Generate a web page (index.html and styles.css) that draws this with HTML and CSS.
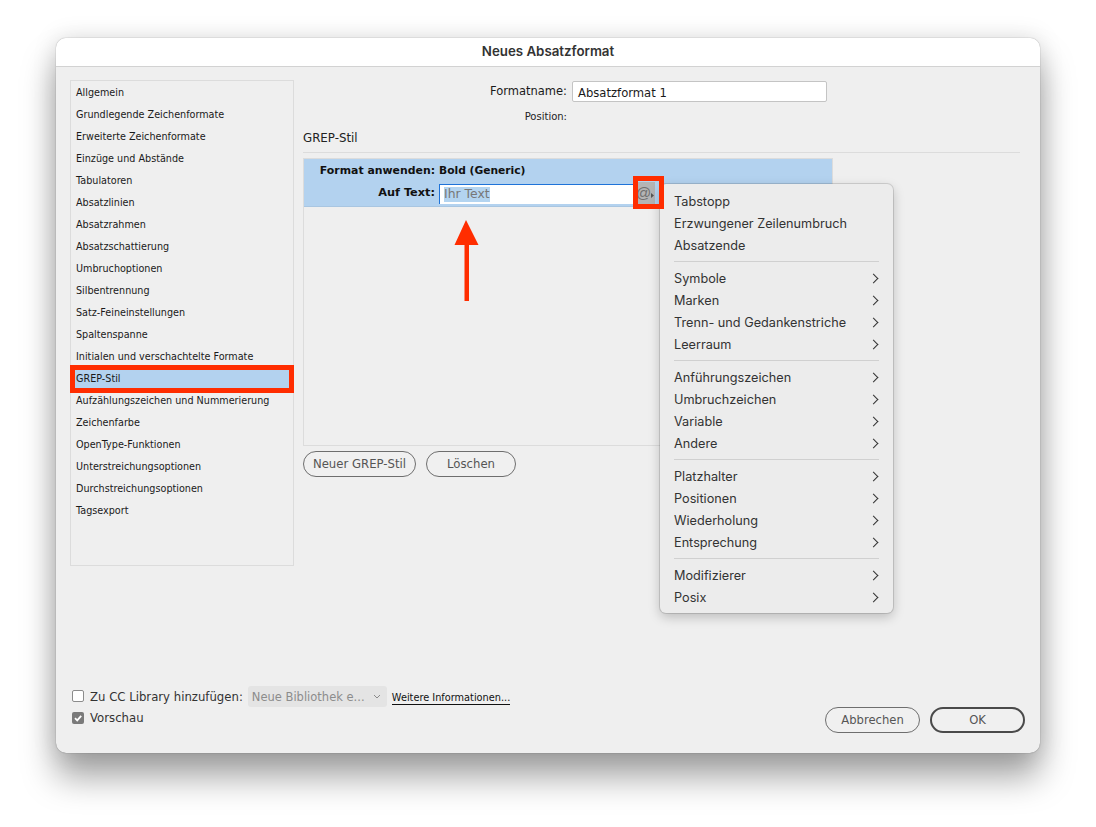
FILE: index.html
```html
<!DOCTYPE html>
<html lang="de">
<head>
<meta charset="utf-8">
<title>Neues Absatzformat</title>
<link rel="stylesheet" href="styles.css">
</head>
<body>
<div class="stage">
  <div class="dialog">
    <header class="titlebar">Neues Absatzformat</header>
    <div class="content">
      <ul class="sidebar">
        <li>Allgemein</li>
        <li>Grundlegende Zeichenformate</li>
        <li>Erweiterte Zeichenformate</li>
        <li>Einzüge und Abstände</li>
        <li>Tabulatoren</li>
        <li>Absatzlinien</li>
        <li>Absatzrahmen</li>
        <li>Absatzschattierung</li>
        <li>Umbruchoptionen</li>
        <li>Silbentrennung</li>
        <li>Satz-Feineinstellungen</li>
        <li>Spaltenspanne</li>
        <li>Initialen und verschachtelte Formate</li>
        <li class="selected">GREP-Stil</li>
        <li>Aufzählungszeichen und Nummerierung</li>
        <li>Zeichenfarbe</li>
        <li>OpenType-Funktionen</li>
        <li>Unterstreichungsoptionen</li>
        <li>Durchstreichungsoptionen</li>
        <li>Tagsexport</li>
      </ul>
      <main class="main">
        <div class="name-row">
          <span class="name-label">Formatname:</span>
          <span class="name-input">Absatzformat 1</span>
        </div>
        <div class="position-row">Position:</div>
        <div class="section-title">GREP-Stil</div>
        <div class="panel">
          <div class="rule-band">
            <div class="rule-row rule-row-top">
              <span class="rule-label">Format anwenden:</span>
              <span class="rule-value">Bold (Generic)</span>
            </div>
            <div class="rule-row rule-row-text">
              <span class="rule-label">Auf Text:</span>
              <span class="rule-input"><span class="sel">Ihr Text</span></span>
              <span class="at-button">@<svg class="at-caret" width="3" height="5" viewBox="0 0 3 5"><path d="M0 0l3 2.500-3 2.500z"/></svg></span>
            </div>
          </div>
        </div>
        <div class="panel-buttons">
          <span class="btn btn-new">Neuer GREP-Stil</span>
          <span class="btn btn-del">Löschen</span>
        </div>
      </main>
    </div>
    <footer class="footer">
      <div class="footer-left">
        <div class="check-row">
          <span class="check"></span>
          <span class="check-label">Zu CC Library hinzufügen:</span>
          <span class="select">Neue Bibliothek e...<svg class="select-caret" width="8" height="5" viewBox="0 0 8 5"><path d="M1 1l3 3 3-3" fill="none" stroke="#8a8a8a" stroke-width="1"/></svg></span>
          <span class="more-link">Weitere Informationen...</span>
        </div>
        <div class="check-row check-row-last">
          <span class="check checked"><svg width="12" height="12" viewBox="0 0 12 12"><path d="M3 6.200l2.200 2.200L9.200 3.800" fill="none" stroke="#fff" stroke-width="1.800"/></svg></span>
          <span class="check-label">Vorschau</span>
        </div>
      </div>
      <div class="footer-right">
        <span class="btn btn-action">Abbrechen</span>
        <span class="btn btn-action btn-default">OK</span>
      </div>
    </footer>

    <div class="menu">
      <div class="mi">Tabstopp</div>
      <div class="mi">Erzwungener Zeilenumbruch</div>
      <div class="mi">Absatzende</div>
      <div class="sep"></div>
      <div class="mi sub">Symbole</div>
      <div class="mi sub">Marken</div>
      <div class="mi sub">Trenn- und Gedankenstriche</div>
      <div class="mi sub">Leerraum</div>
      <div class="sep"></div>
      <div class="mi sub">Anführungszeichen</div>
      <div class="mi sub">Umbruchzeichen</div>
      <div class="mi sub">Variable</div>
      <div class="mi sub">Andere</div>
      <div class="sep"></div>
      <div class="mi sub">Platzhalter</div>
      <div class="mi sub">Positionen</div>
      <div class="mi sub">Wiederholung</div>
      <div class="mi sub">Entsprechung</div>
      <div class="sep"></div>
      <div class="mi sub">Modifizierer</div>
      <div class="mi sub">Posix</div>
    </div>

    <div class="at-highlight"></div>
    <svg class="arrow" width="26" height="82" viewBox="0 0 26 82"><path d="M12 0L24.500 25H15V81H10.500V25H0.500z" fill="#ff2d00"/></svg>
  </div>
</div>
</body>
</html>
```
FILE: styles.css
```css
* { box-sizing: border-box; }
html, body { margin: 0; padding: 0; background: #fff; }
body { width: 1096px; height: 827px; overflow: hidden; font-family: "DejaVu Sans", sans-serif; color: #111; }
.stage { padding: 38px 56px 74px; }
.dialog {
  position: relative;
  width: 984px;
  height: 715px;
  display: flex;
  flex-direction: column;
  background: #efefef;
  border-radius: 10px;
  box-shadow: 0 24px 34px rgba(0,0,0,.36), 0 0 24px rgba(0,0,0,.13), 0 0 1px rgba(0,0,0,.55);
}
.titlebar {
  height: 29px;
  flex: none;
  text-align: center;
  background: #fff;
  border-bottom: 1px solid #d2d2d2;
  border-radius: 10px 10px 0 0;
  font: 600 13.300px/27px "Inter", sans-serif;
  color: #333;
}
.content { display: flex; padding: 13px 20px 0 14px; }

.sidebar {
  list-style: none;
  margin: 0;
  padding: 1px 0 0;
  width: 224px;
  height: 486px;
  flex: none;
  border: 1px solid #dcdcdc;
}
.sidebar li {
  position: relative;
  height: 22px;
  padding-left: 5px;
  font-size: 9.650px;
  line-height: 21px;
  white-space: nowrap;
  color: #1a1a1a;
}
.sidebar li.selected { background: #b3d2ef; }
.sidebar li.selected::after {
  content: "";
  position: absolute;
  inset: -3px -1px;
  border: 5px solid #ff2d00;
}

.main { flex: 1; margin-left: 9px; }
.name-row { display: flex; align-items: center; height: 22px; }
.name-label { width: 264px; text-align: right; font-size: 11.500px; color: #1a1a1a; }
.name-input {
  margin-left: 5px;
  width: 255px;
  height: 21px;
  padding: 1px 0 0 5px;
  background: #fff;
  border: 1px solid #c4c4c4;
  border-radius: 2px;
  font-size: 11.600px;
  line-height: 20px;
  color: #1a1a1a;
}
.position-row { height: 14px; margin-top: 8px; width: 264px; text-align: right; font-size: 10px; line-height: 14px; color: #222; }
.section-title {
  margin-top: 6px;
  height: 23px;
  border-bottom: 1px solid #dcdcdc;
  font-size: 11.800px;
  line-height: 16px;
  color: #222;
}
.panel {
  margin-top: 5px;
  width: 530px;
  height: 288px;
  border: 1px solid #dcdcdc;
}
.rule-band { height: 48px; padding-top: 3px; background: #b3d2ef; border-bottom: 1px solid #a9c6e1; }
.rule-row { display: flex; align-items: center; }
.rule-row-top { height: 17px; }
.rule-row-text { height: 27px; }
.rule-label { width: 131px; text-align: right; font-size: 10.900px; font-weight: 700; color: #111; white-space: nowrap; }
.rule-row-text .rule-label { font-size: 11.300px; }
.rule-value { margin-left: 4px; font-size: 10.700px; font-weight: 700; color: #111; white-space: nowrap; }
.rule-input {
  align-self: flex-start;
  margin-left: 4px;
  margin-top: 5px;
  width: 195px;
  height: 20px;
  padding: 2px 0 0 4px;
  background: #fff;
  border-top: 1px solid #1f73d8;
  border-left: 1px solid #1f73d8;
  font-size: 12.400px;
  line-height: 14px;
  color: #777;
}
.sel { background: #b3d4f0; display: inline-block; height: 15px; vertical-align: top; }
.at-button {
  position: relative;
  align-self: flex-start;
  width: 21px;
  height: 23px;
  margin-top: 3px;
  padding-left: 2px;
  background: #b4b4b4;
  font: 15px/21px "Liberation Sans", sans-serif;
  color: #707070;
}
.at-caret { position: absolute; right: 1px; bottom: 7px; fill: #555; }

.panel-buttons { display: flex; gap: 10px; margin-top: 5px; }
.btn {
  display: block;
  height: 26px;
  text-align: center;
  border: 1px solid #6e6e6e;
  border-radius: 13px;
  font-size: 11.700px;
  line-height: 25px;
  color: #555;
  background: #f0f0f0;
}
.btn-new { width: 113px; }
.btn-del { width: 90px; }

.footer {
  margin-top: auto;
  display: flex;
  justify-content: space-between;
  align-items: flex-end;
  padding: 0 15px 20px 16px;
}
.footer-left { margin-bottom: 5px; }
.check-row { display: flex; align-items: center; height: 22px; }
.check-row-last { height: 21px; }
.check {
  width: 12px;
  height: 12px;
  border: 1px solid #8c8c8c;
  border-radius: 2px;
  background: #fff;
  flex: none;
}
.check.checked { border: 0; background: #7a7a7a; }
.check svg { display: block; }
.check-label { margin-left: 6px; margin-top: 1px; font-size: 11.700px; color: #333; white-space: nowrap; }
.select {
  display: flex;
  align-items: center;
  justify-content: space-between;
  margin-left: 5px;
  width: 139px;
  height: 21px;
  padding: 1px 6px 0 4px;
  border-radius: 3px;
  background: #e4e4e4;
  font-size: 11.500px;
  color: #8c8c8c;
  white-space: nowrap;
}
.more-link {
  margin-left: 5px;
  margin-top: 4px;
  font-size: 9.750px;
  color: #111;
  white-space: nowrap;
  border-bottom: 1px solid #111;
  line-height: 13px;
}
.footer-right { display: flex; gap: 10px; }
.btn-action { width: 95px; font-size: 11.600px; }
.btn-default { border: 2px solid #4a4a4a; line-height: 23px; }

.menu {
  position: absolute;
  left: 604px;
  top: 146px;
  width: 233px;
  height: 429px;
  padding: 6px 0 5px;
  background: #ececec;
  border-radius: 6px;
  box-shadow: 0 0 0 1px rgba(0,0,0,.12), 0 4px 12px rgba(0,0,0,.22);
  font-family: "Inter", sans-serif;
  font-size: 12.700px;
  color: #333;
}
.mi { position: relative; height: 22px; line-height: 24px; padding-left: 14px; }
.mi.sub::after {
  content: "";
  position: absolute;
  right: 16px;
  top: 8px;
  width: 6px;
  height: 6px;
  border-top: 1.800px solid #333;
  border-right: 1.800px solid #333;
  transform: rotate(45deg);
}
.sep { height: 1px; margin: 5px 14px; background: #d0d0d0; }

.at-highlight {
  position: absolute;
  left: 577px;
  top: 138px;
  width: 31px;
  height: 33px;
  border: 5px solid #ff2d00;
}
.arrow { position: absolute; left: 398px; top: 182px; }
```
